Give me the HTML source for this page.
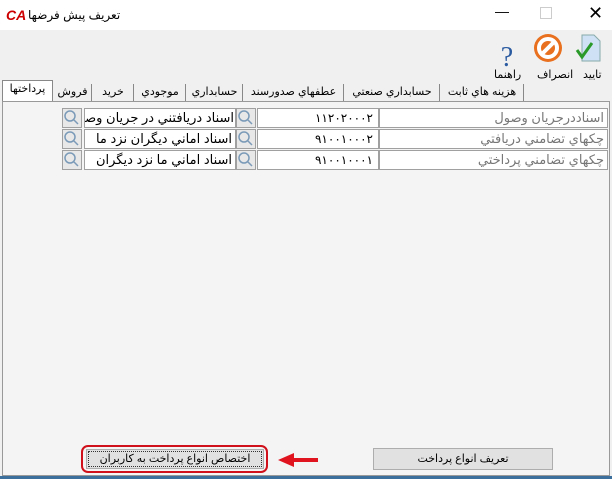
<html><head><style>
body{margin:0;width:612px;height:479px;background:#f0f0f0;font-family:"Liberation Sans","DejaVu Sans",sans-serif;position:relative;overflow:hidden;font-size:12px}
.a{position:absolute}
.f{position:absolute;background:#fff;border:1px solid #a0a0a0;box-sizing:border-box;height:20px;line-height:18px;direction:rtl;padding:0 3px;white-space:nowrap;overflow:hidden;font-size:13px}
.n{position:absolute;background:#fff;border:1px solid #a0a0a0;box-sizing:border-box;height:20px;line-height:18px;text-align:right;padding-right:5px;font-size:12px;white-space:nowrap}
.s{position:absolute;width:20px;height:20px;box-sizing:border-box;border:1px solid #a0a0a0;background:#e8e8e8}
.tab{position:absolute;top:84px;height:17px;line-height:17px;font-size:11px;text-align:center;border-left:1px solid #888;direction:rtl;white-space:nowrap}
.btn{position:absolute;background:#e1e1e1;border:1px solid #adadad;box-sizing:border-box;text-align:center;font-size:11px;direction:rtl}
</style></head><body>
<div class="a" style="left:0;top:0;width:612px;height:30px;background:#fff"></div>
<div class="a" style="left:6px;top:7px;color:#c00;font-weight:bold;font-size:14px;font-style:italic">CA</div>
<div class="a" style="left:28px;top:8px;font-size:12px;direction:rtl">تعريف پيش فرضها</div>
<div class="a" style="left:495px;top:3px;font-size:14px">—</div>
<div class="a" style="left:540px;top:7px;width:10px;height:10px;border:1px solid #ccc"></div>
<div class="a" style="left:588px;top:3px;font-size:18px">✕</div>
<svg class="a" style="left:490px;top:32px" width="122" height="48">
<text x="17" y="34" font-size="28" fill="#2a5aa0" font-family="Liberation Serif" text-anchor="middle">?</text>
<circle cx="58" cy="16" r="14" fill="#e8701e"/><circle cx="58" cy="16" r="9" fill="none" stroke="#fff" stroke-width="4"/><line x1="52" y1="22" x2="64" y2="10" stroke="#fff" stroke-width="4"/>
<path d="M92 3h12l6 6v20h-18z" fill="#cfe2f5" stroke="#8aa"/><path d="M87 18l5 7 10-14" stroke="#2a9a2a" stroke-width="3" fill="none"/>
</svg>
<div class="a" style="left:494px;top:68px;font-size:11px">راهنما</div>
<div class="a" style="left:537px;top:68px;font-size:11px">انصراف</div>
<div class="a" style="left:583px;top:68px;font-size:11px">تاييد</div>
<div class="tab" style="left:2px;width:49px;top:80px;height:21px;background:#fff;border:1px solid #888;border-bottom:none">پرداختها</div>
<div class="tab" style="left:52px;width:39px">فروش</div>
<div class="tab" style="left:91px;width:42px">خريد</div>
<div class="tab" style="left:133px;width:52px">موجودي</div>
<div class="tab" style="left:185px;width:57px">حسابداري</div>
<div class="tab" style="left:242px;width:101px">عطفهاي صدورسند</div>
<div class="tab" style="left:343px;width:96px">حسابداري صنعتي</div>
<div class="tab" style="left:439px;width:84px">هزينه هاي ثابت</div>
<div class="a" style="left:523px;top:84px;height:17px;border-left:1px solid #888"></div>
<div class="a" style="left:2px;top:101px;width:608px;height:375px;border:1px solid #999;box-sizing:border-box;background:#f4f4f4"></div>
<div class="f" style="left:379px;top:108px;width:229px;color:#777">اسناددرجريان وصول</div>
<div class="n" style="left:257px;top:108px;width:122px">۱۱۲۰۲۰۰۰۲</div>
<div class="s" style="left:236px;top:108px"></div>
<div class="f" style="left:84px;top:108px;width:152px;padding:0 1px">اسناد دريافتني در جريان وصول</div>
<div class="s" style="left:62px;top:108px"></div>
<div class="f" style="left:379px;top:129px;width:229px;color:#777">چكهاي تضامني دريافتي</div>
<div class="n" style="left:257px;top:129px;width:122px">۹۱۰۰۱۰۰۰۲</div>
<div class="s" style="left:236px;top:129px"></div>
<div class="f" style="left:84px;top:129px;width:152px">اسناد اماني ديگران نزد ما</div>
<div class="s" style="left:62px;top:129px"></div>
<div class="f" style="left:379px;top:150px;width:229px;color:#777">چكهاي تضامني پرداختي</div>
<div class="n" style="left:257px;top:150px;width:122px">۹۱۰۰۱۰۰۰۱</div>
<div class="s" style="left:236px;top:150px"></div>
<div class="f" style="left:84px;top:150px;width:152px">اسناد اماني ما نزد ديگران</div>
<div class="s" style="left:62px;top:150px"></div>
<div class="btn" style="left:86px;top:449px;width:178px;height:20px;line-height:18px;outline:1px dotted #333;outline-offset:-3px">اختصاص انواع پرداخت به كاربران</div>
<div class="btn" style="left:373px;top:448px;width:180px;height:22px;line-height:20px">تعريف انواع پرداخت</div>
<svg class="a" style="left:0;top:0" width="612" height="479">
<g fill="none" stroke="#7a9ab8" stroke-width="1.5">
<circle cx="244" cy="116" r="5"/><line x1="248" y1="120" x2="252" y2="124"/>
<circle cx="70" cy="116" r="5"/><line x1="74" y1="120" x2="78" y2="124"/>
<circle cx="244" cy="137" r="5"/><line x1="248" y1="141" x2="252" y2="145"/>
<circle cx="70" cy="137" r="5"/><line x1="74" y1="141" x2="78" y2="145"/>
<circle cx="244" cy="158" r="5"/><line x1="248" y1="162" x2="252" y2="166"/>
<circle cx="70" cy="158" r="5"/><line x1="74" y1="162" x2="78" y2="166"/>
</g>
<path d="M318 458h-24v-5l-16 7 16 7v-5h24z" fill="#e0141e"/>
<rect x="82" y="446" width="185" height="26" rx="6" fill="none" stroke="#d0101a" stroke-width="2"/>
</svg>
<div class="a" style="left:0;top:476px;width:612px;height:3px;background:#3d6f9c"></div>
</body></html>
